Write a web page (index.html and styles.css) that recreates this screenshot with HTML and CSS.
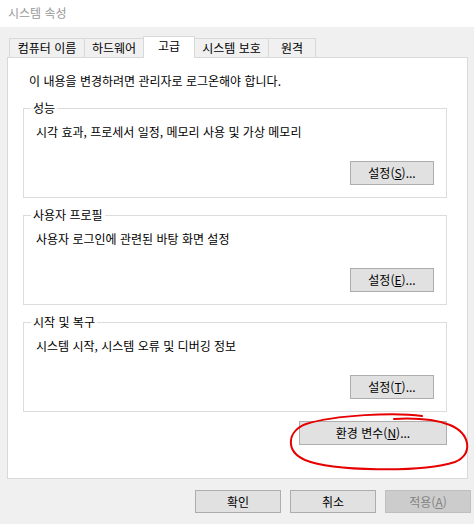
FILE: index.html
```html
<!DOCTYPE html>
<html lang="ko">

<head>
    <meta charset="UTF-8">
    <title>시스템 속성</title>
    <link rel="stylesheet" href="styles.css">
</head>

<body>
    <div class="window">
        <div class="titlebar">시스템 속성</div>

        <div class="tabs">
            <div class="tab t1">컴퓨터 이름</div>
            <div class="tab t2">하드웨어</div>
            <div class="tab t3 active">고급</div>
            <div class="tab t4">시스템 보호</div>
            <div class="tab t5">원격</div>
        </div>

        <div class="panel">
            <p class="intro">이 내용을 변경하려면 관리자로 로그온해야 합니다.</p>

            <fieldset class="group">
                <legend>성능</legend>
                <p class="desc">시각 효과, 프로세서 일정, 메모리 사용 및 가상 메모리</p>
                <div class="row">
                    <button class="btn">설정(<u>S</u>)...</button>
                </div>
            </fieldset>

            <fieldset class="group">
                <legend>사용자 프로필</legend>
                <p class="desc">사용자 로그인에 관련된 바탕 화면 설정</p>
                <div class="row">
                    <button class="btn">설정(<u>E</u>)...</button>
                </div>
            </fieldset>

            <fieldset class="group">
                <legend>시작 및 복구</legend>
                <p class="desc">시스템 시작, 시스템 오류 및 디버깅 정보</p>
                <div class="row">
                    <button class="btn">설정(<u>T</u>)...</button>
                </div>
            </fieldset>

            <div class="row env">
                <button class="btn wide">환경 변수(<u>N</u>)...</button>
            </div>
        </div>

        <div class="actions">
            <button class="btn foot">확인</button>
            <button class="btn foot">취소</button>
            <button class="btn foot" disabled>적용(<u>A</u>)</button>
        </div>

        <!-- hand-drawn red circle around the env button -->
        <svg class="mark" width="474" height="524" viewBox="0 0 474 524">
            <path d="M422 416 C395 412, 335 415, 306 424 C287 431, 285 451, 305 460 C332 471, 420 473, 455 462 C473 455, 471 434, 450 425 C434 419, 412 418, 394 419"
                fill="none" stroke="#e60000" stroke-width="2" stroke-linecap="round" />
        </svg>
    </div>
</body>

</html>
```

FILE: styles.css
```css
/* Reset */
* {
    margin: 0;
    padding: 0;
    box-sizing: border-box;
}

body {
    font-family: "Noto Sans CJK KR", "Noto Sans", sans-serif;
    font-size: 12px;
    line-height: 16px;
    color: #000;
    background: #f0f0f0;
}

/* Window frame */
.window {
    position: relative;
    width: 474px;
    height: 524px;
    background: #f0f0f0;
    overflow: hidden;
}

.titlebar {
    height: 27px;
    background: #ffffff;
    color: #999999;
    padding-left: 8px;
    line-height: 25px;
}

/* Tabs */
.tabs {
    display: flex;
    align-items: flex-start;
    margin: 9px 0 -1px 9px;
    height: 22px;
}

.tab {
    height: 19px;
    margin-top: 2px;
    margin-left: -1px;
    border: 1px solid #d9d9d9;
    border-bottom: none;
    background: #f0f0f0;
    text-align: center;
    line-height: 17px;
    white-space: nowrap;
}

.tab.t1 { width: 76px; margin-left: 0; }
.tab.t2 { width: 60px; }
.tab.t3 { width: 52px; }
.tab.t4 { width: 75px; }
.tab.t5 { width: 48px; }

.tab.active {
    position: relative;
    z-index: 1;
    height: 22px;
    margin-top: 0;
    background: #ffffff;
    line-height: 18px;
}

/* Tab page */
.panel {
    width: 461px;
    margin-left: 7px;
    background: #ffffff;
    border: 1px solid #d9d9d9;
    padding: 15px 20px 33px 15px;
}

.intro {
    margin-left: 6px;
    margin-bottom: 11px;
}

/* Group boxes */
.group {
    width: 424px;
    border: 1px solid #dcdcdc;
    padding: 8px 12px 12px 12px;
    margin-bottom: 9px;
}

.group legend {
    margin-left: -5px;
    padding: 0 2px;
    line-height: 16px;
}

.desc {
    margin-bottom: 21px;
}

.row {
    display: flex;
    justify-content: flex-end;
}

.env {
    width: 424px;
    margin-top: 7px;
}

/* Buttons */
.btn {
    font-family: inherit;
    font-size: 12px;
    color: #000;
    width: 84px;
    height: 24px;
    background: #e1e1e1;
    border: 1px solid #adadad;
    line-height: 20px;
    cursor: default;
}

.btn u {
    text-underline-offset: 1px;
}

.btn.wide {
    width: 148px;
}

.btn.foot {
    width: 86px;
    height: 23px;
}

.btn:disabled {
    background: #cccccc;
    border-color: #bfbfbf;
    color: #838383;
}

.actions {
    display: flex;
    justify-content: flex-end;
    gap: 9px;
    margin-top: 11px;
    padding-right: 3px;
}

/* Annotation overlay */
.mark {
    position: absolute;
    left: 0;
    top: 0;
    pointer-events: none;
}
```
